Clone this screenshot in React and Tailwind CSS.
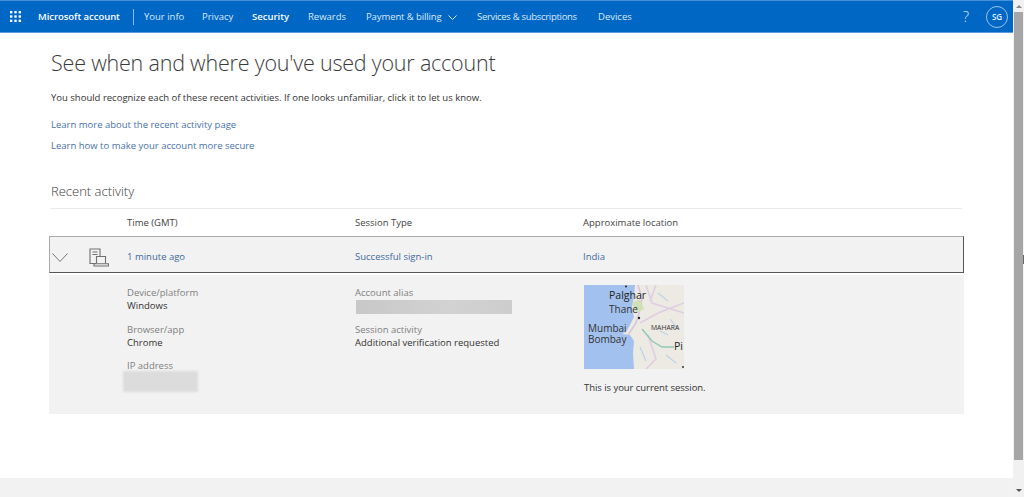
import React from "react";

const navItems = [
  ["Your info", "w-[58px]"],
  ["Privacy", "w-[50px]"],
  ["Security", "w-[56px] font-semibold text-white"],
  ["Rewards", "w-[58px]"],
];

function Grid() {
  const cells = [];
  for (let y = 0; y < 3; y++) for (let x = 0; x < 3; x++) cells.push(<rect key={x + "-" + y} x={x * 4} y={y * 4} width="2.2" height="2.2" fill="#fff" />);
  return <svg width="11" height="11" viewBox="0 0 10.2 10.2" className="shrink-0">{cells}</svg>;
}

function Chevron({ className, color, w = 9, h = 5, sw = 1 }) {
  return (
    <svg width={w} height={h} viewBox={`0 0 ${w} ${h}`} fill="none" stroke={color} strokeWidth={sw} className={className}>
      <path d={`M0.5 0.5L${w / 2} ${h - 0.5}L${w - 0.5} 0.5`} />
    </svg>
  );
}

function DeviceIcon() {
  return (
    <svg width="20" height="19" viewBox="0 0 20 19" fill="none" stroke="#707070" strokeWidth="1.1">
      <path d="M7 15.5H1V1H11V8" />
      <path d="M3.5 4H8.5M3.5 6.5H8.5" />
      <path d="M7.5 15.5V8.5H16.5V15.5" />
      <path d="M5 18H19.5V15.8H5Z" />
    </svg>
  );
}

function MapThumb() {
  return (
    <svg width="100" height="84" viewBox="0 0 100 84" className="block" style={{ fontFamily: '"Open Sans", sans-serif' }}>
      <rect width="100" height="84" fill="#eceae3" />
      <path d="M0 0H51L50 12L48 22L50 32L46 40L42 47L38 49L46 50L50 56L49 68L50 84H0Z" fill="#a3c1ee" />
      <path d="M54 0L58 14L55 28L52 38L44 50" stroke="#dcc3dd" strokeWidth="1.6" fill="none" />
      <path d="M62 0L68 18L100 28M56 38L74 28L100 18M64 50L72 74L62 84M72 0L66 16" stroke="#e0cde1" strokeWidth="1.6" fill="none" />
      <path d="M48 18L56 14L60 24L52 28Z" fill="#cfe0b4" />
      <path d="M58 44L68 56L78 62L90 62" stroke="#8fcab4" strokeWidth="1.4" fill="none" />
      <path d="M74 8L84 16M86 34L94 44M82 70L92 78M76 46L84 50M56 62L62 76" stroke="#bcd3ea" strokeWidth="1.2" fill="none" />
      <circle cx="42" cy="1.5" r="1" fill="#222" />
      <circle cx="55" cy="33" r="1.2" fill="#222" />
      <circle cx="99" cy="82" r="0.9" fill="#222" />
      <text x="25" y="14" fontSize="10.5" fill="#222">Palghar</text>
      <text x="25" y="28" fontSize="10" fill="#333">Thane</text>
      <text x="4" y="46.5" fontSize="10" fill="#333">Mumbai</text>
      <text x="4" y="58" fontSize="10" fill="#333">Bombay</text>
      <text x="67" y="45" fontSize="6.8" fill="#333">MAHARA</text>
      <text x="90" y="65" fontSize="10.5" fill="#222">Pi</text>
    </svg>
  );
}

function Detail({ label, value, children, className = "" }) {
  return (
    <div className={className}>
      <div className="text-[#808080] leading-[13px]">{label}</div>
      {value ? <div className="text-[#333] leading-[13px]">{value}</div> : children}
    </div>
  );
}

export default function App() {
  return (
    <div className="flex h-[497px] w-[1024px] overflow-hidden bg-white text-[9.5px] text-[#333]" style={{ fontFamily: '"Open Sans", "Noto Sans", sans-serif' }}>
      <div className="flex h-full w-[1013px] shrink-0 flex-col">
        <header className="flex h-[33px] shrink-0 items-center border-t border-b border-t-[#4a90d9] border-b-[#5b9bdc] bg-[#0067c5] pl-[10px] pr-[5px] text-[#dbe9f7]">
          <Grid />
          <span className="ml-[17px] w-[95px] whitespace-nowrap pt-px font-semibold tracking-[-0.05px] text-white">Microsoft account</span>
          <span className="h-[16px] w-px bg-[#8db8e6]" />
          <nav className="ml-[10px] flex flex-1 items-center pt-px">
            {navItems.map(([t, c]) => (
              <a key={t} className={`whitespace-nowrap ${c}`}>{t}</a>
            ))}
            <a className="flex w-[111px] items-center gap-[6px] whitespace-nowrap tracking-[-0.1px]">
              Payment &amp; billing
              <Chevron color="#dbe9f7" />
            </a>
            <a className="w-[121px] whitespace-nowrap tracking-[-0.3px]">Services &amp; subscriptions</a>
            <a className="whitespace-nowrap">Devices</a>
          </nav>
          <span className="mr-[4px] text-[15px] font-light leading-none text-[#dbe9f7]">?</span>
          <span className="ml-[13px] flex h-[22px] w-[22px] items-center justify-center rounded-full border border-[#9cc3ec] text-[8px] font-semibold text-[#e6f0fa]">SG</span>
        </header>

        <main className="flex-1 pl-[49px] pr-[49px]">
          <div className="pl-[2px]">
            <h1 className="mt-[15px] whitespace-nowrap text-[21.5px] font-light leading-[30px] tracking-[-0.2px] text-[#3a3a3a]">See when and where you've used your account</h1>
            <p className="mt-[13px] leading-[14px] text-[#333]">You should recognize each of these recent activities. If one looks unfamiliar, click it to let us know.</p>
            <p className="mt-[13px] leading-[14px] text-[#4a72a8]"><a>Learn more about the recent activity page</a></p>
            <p className="mt-[7px] leading-[14px] text-[#4a72a8]"><a>Learn how to make your account more secure</a></p>
            <h2 className="mt-[29px] text-[13px] font-light leading-[18px] text-[#3a3a3a]">Recent activity</h2>
          </div>
          <div className="ml-px mr-[2px] mt-[8px] grid h-[28px] grid-cols-[77px_228px_228px_1fr] items-center border-t border-[#eaeaea] pt-[2px] text-[#444]">
            <span />
            <span>Time (GMT)</span>
            <span>Session Type</span>
            <span>Approximate location</span>
          </div>

          <div className="grid h-[37px] w-[915px] grid-cols-[77px_228px_228px_1fr] items-center border border-t-[#aaa] border-l-[#aaa] border-r-[#555] border-b-[#555] bg-[#f2f2f2] pt-[6px] text-[#41699f]">
            <div className="flex items-center">
              <Chevron color="#777" w={16} h={9} className="ml-[2px]" />
              <span className="ml-[21px]"><DeviceIcon /></span>
            </div>
            <a>1 minute ago</a>
            <a>Successful sign-in</a>
            <a>India</a>
          </div>

          <div className="mt-[2px] grid h-[139px] w-[915px] grid-cols-[78px_228px_228px_1fr] bg-[#f2f2f2] pt-[11px]">
            <span />
            <div>
              <Detail label="Device/platform" value="Windows" />
              <Detail label="Browser/app" value="Chrome" className="mt-[11px]" />
              <Detail label="IP address" className="mt-[10px]">
                <div className="ml-[-4px] mt-[-1px] h-[21px] w-[75px] bg-[#dcdcdc] blur-[1px]" />
              </Detail>
            </div>
            <div>
              <Detail label="Account alias">
                <div className="ml-px mt-[1px] h-[14px] w-[156px] bg-[linear-gradient(90deg,#c8c8c8,#d2d2d2_60%,#cdcdcd)] blur-[0.5px]" />
              </Detail>
              <Detail label="Session activity" value="Additional verification requested" className="mt-[9px]" />
            </div>
            <div className="pl-px">
              <div className="mt-[-1px]"><MapThumb /></div>
              <p className="mt-[12px] leading-[14px] tracking-[-0.05px] text-[#333]">This is your current session.</p>
            </div>
          </div>
        </main>

        <footer className="h-[19px] shrink-0 bg-[#f2f2f2]" />
      </div>

      <div className="flex h-full w-[11px] shrink-0 flex-col items-center bg-[#f1f1f1]">
        <div className="flex h-[12px] w-full items-center justify-center">
          <span className="h-0 w-0 border-x-[3px] border-b-[3px] border-x-transparent border-b-[#888]" />
        </div>
        <div className="relative h-[448px] w-[9px] bg-[#a6a6a6]">
          <span className="absolute left-[9px] top-[243px] h-[9px] w-px bg-[#666]" />
        </div>
        <div className="flex flex-1 items-end justify-center pb-[5px]">
          <span className="h-0 w-0 border-x-[3px] border-t-[3px] border-x-transparent border-t-[#555]" />
        </div>
      </div>
    </div>
  );
}
